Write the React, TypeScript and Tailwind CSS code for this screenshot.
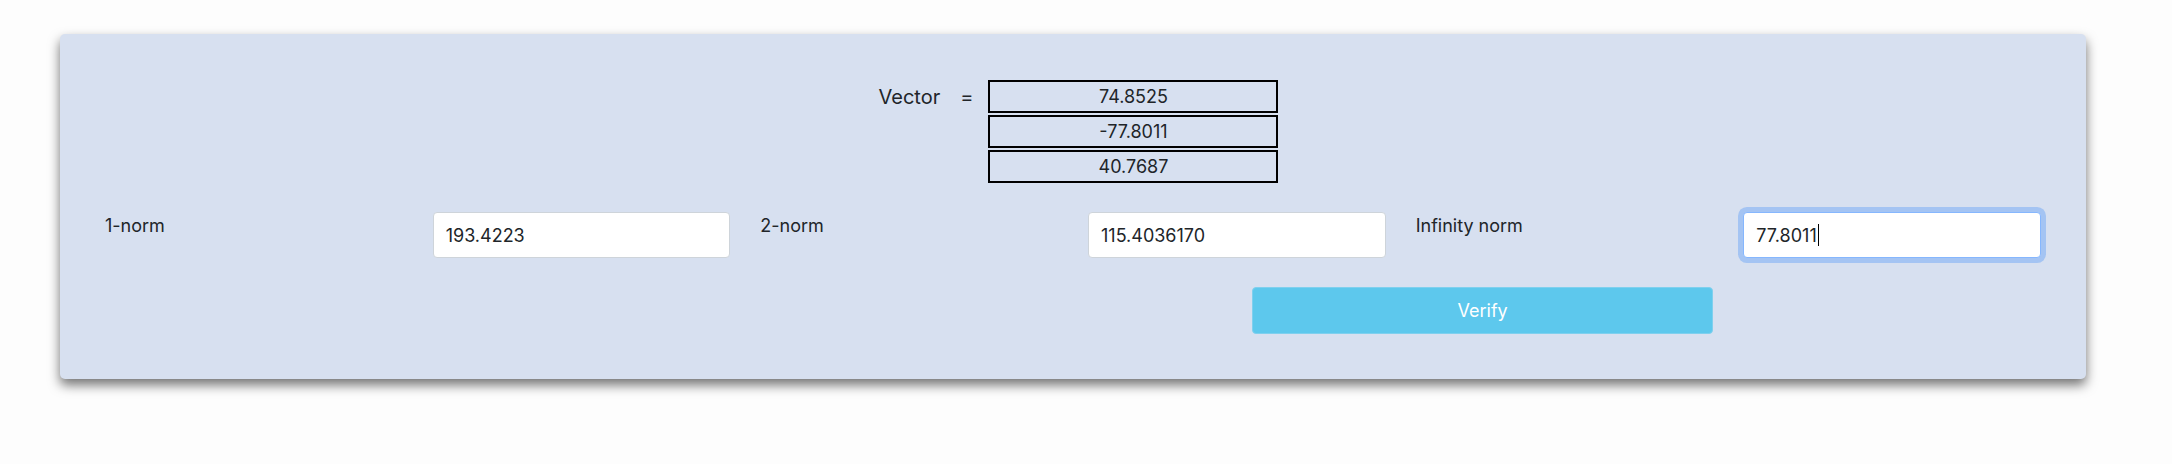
import React from "react";

const font = { fontFamily: "Inter, 'Noto Sans', 'Liberation Sans', sans-serif" };

function Field({ value }: { value: string }) {
  return (
    <input
      readOnly
      value={value}
      className="h-[46px] w-full rounded-[4px] border border-[#ced4da] bg-white px-3 text-[18px] text-[#212529] outline-none"
      style={font}
    />
  );
}

export default function App() {
  const vec = ["74.8525", "-77.8011", "40.7687"];
  return (
    <div className="min-h-[464px] w-[2172px] bg-[#fdfdfd] pt-[34px] text-[#212529]" style={font}>
      <div className="ml-[60px] h-[345px] w-[2026px] rounded-[5px] bg-[#d7e0f0] px-[30px] pt-[46px] shadow-[0_6px_12px_rgba(0,0,0,0.55)]">
        <div className="flex items-start justify-center pl-[11px]">
          <div className="flex h-[33px] items-center text-[20px]">
            <span>Vector</span>
            <span className="ml-[20px] mr-[15px]">=</span>
          </div>
          <div className="flex flex-col gap-[2px]">
            {vec.map((v) => (
              <div
                key={v}
                className="flex h-[33px] w-[290px] items-center justify-center border-2 border-black text-[18px] text-[#212529]"
              >
                {v}
              </div>
            ))}
          </div>
        </div>

        <div className="mt-[29px] grid grid-cols-12">
          <div className="col-span-2 px-[15px] text-[18px] leading-[27px]">1-norm</div>
          <div className="col-span-2 px-[15px]">
            <Field value="193.4223" />
          </div>
          <div className="col-span-2 px-[15px] text-[18px] leading-[27px]">2-norm</div>
          <div className="col-span-2 px-[15px]">
            <Field value="115.4036170" />
          </div>
          <div className="col-span-2 px-[15px] text-[18px] leading-[27px]">Infinity norm</div>
          <div className="col-span-2 px-[15px]">
            <div className="flex h-[46px] w-full items-center rounded-[4px] border border-[#86b7fe] bg-white px-3 text-[18px] text-[#212529] shadow-[0_0_0_5px_rgba(13,110,253,0.25)]">
              <span>77.8011</span>
              <span className="ml-[1px] inline-block h-[22px] w-[1px] bg-black" />
            </div>
          </div>
        </div>

        <div className="mt-[29px] grid grid-cols-12">
          <div className="col-span-3 col-start-8 px-[15px]">
            <button className="flex h-[47px] w-full items-center justify-center rounded-[4px] border border-[#7fd0ee] bg-[#5dc8ed] text-[18px] text-white">
              Verify
            </button>
          </div>
        </div>
      </div>
    </div>
  );
}
